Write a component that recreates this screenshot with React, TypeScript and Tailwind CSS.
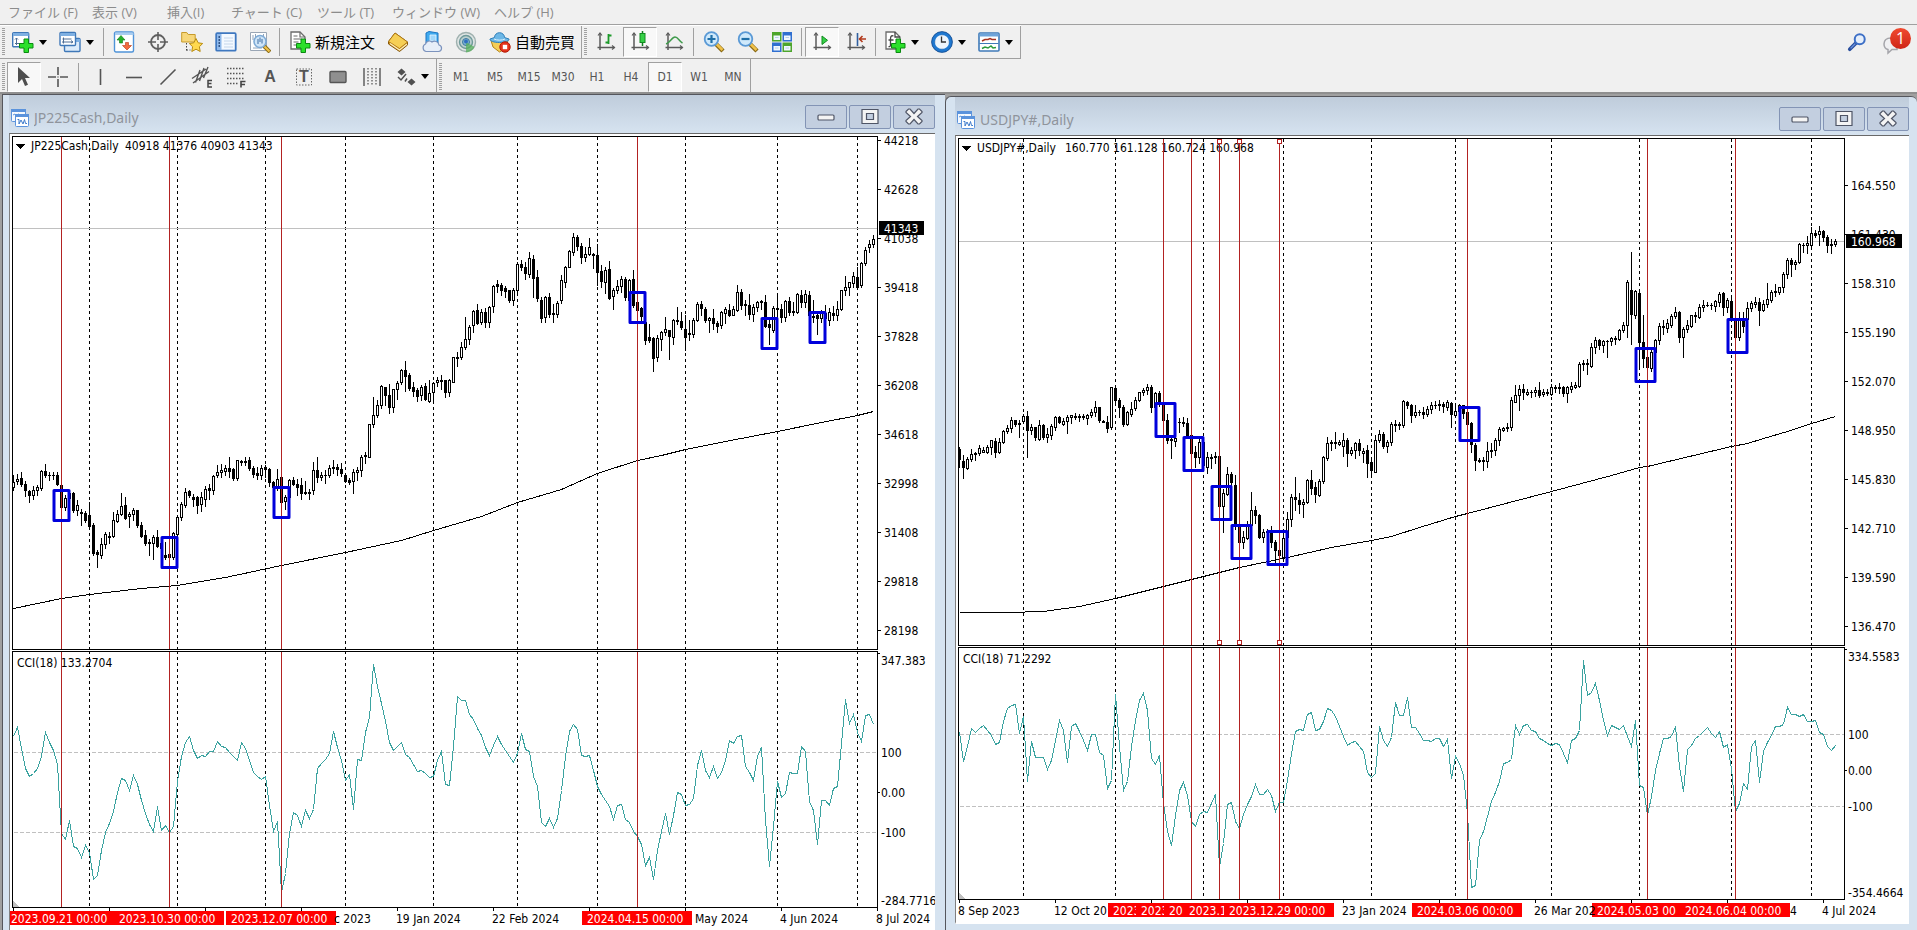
import type { ReactNode } from 'react';

type Mark = { bar: number; date: string; handles?: boolean };

type ChartData = {
  title: string;
  quotes: string;
  quotesX: number;
  indicator: string;
  // plot geometry, in pixels inside the client area
  right: number;
  priceBottom: number;
  cciTop: number;
  cciBottom: number;
  priceShift: number;
  cciShift: number;
  candles: string;
  cci: string;
  average: [number, number][];
  months: number[];
  marks: Mark[];
  boxes: { x: number; y: number }[];
  boxSize: [number, number];
  lastPrice: { y: number; label: string; width: number };
  priceLabels: { first: number; labels: string[] };
  cciLabels: { y: number; label: string }[];
  levels: number[];
  dates: { x: number; label: string }[];
};

const nikkei: ChartData = {
  title: 'JP225Cash,Daily',
  quotes: '40918 41376 40903 41343',
  quotesX: 115,
  indicator: 'CCI(18) 133.2704',
  right: 867,
  priceBottom: 515,
  cciTop: 517,
  cciBottom: 773,
  priceShift: -44,
  cciShift: 506,
  // high open close low, one bar each
  candles: `1078 1112 1098 1122,1076 1096 1090 1104,1072 1088 1104 1110,1096 1104 1122 1138,1122 1124 1134 1156,1110 1134 1122 1146,1108 1120 1114 1134,1066 1116 1068 1120,1048 1068 1080 1084,1070 1078 1080 1092,
1070 1080 1078 1090,1072 1078 1104 1106,1104 1106 1168 1172,1134 1170 1144 1176,1124 1144 1130 1160,1128 1130 1178 1184,1148 1178 1164 1190,1174 1182 1186 1218,1180 1186 1206 1212,1156 1192 1222 1226,
1214 1220 1298 1304,1288 1296 1300 1338,1256 1302 1272 1312,1238 1272 1244 1284,1240 1252 1250 1270,1184 1250 1206 1254,1178 1208 1188 1212,1130 1188 1166 1190,1140 1164 1200 1202,1184 1194 1188 1226,
1172 1188 1176 1206,1176 1178 1220 1224,1212 1220 1250 1254,1234 1248 1270 1274,1258 1268 1270 1302,1246 1270 1254 1314,1232 1252 1278 1282,1256 1284 1270 1300,1266 1304 1308 1314,1298 1300 1308 1312,
1240 1308 1242 1314,1190 1244 1196 1250,1156 1196 1160 1206,1116 1164 1126 1170,1120 1124 1136 1140,1132 1140 1146 1166,1138 1142 1162 1186,1128 1160 1142 1180,1110 1146 1118 1166,1104 1116 1120 1146,
1080 1122 1082 1132,1050 1080 1070 1086,1048 1070 1066 1086,1050 1068 1060 1078,1028 1060 1068 1086,1060 1062 1088 1092,1036 1088 1038 1094,1036 1040 1042 1050,1030 1042 1040 1050,1030 1038 1060 1064,
1054 1060 1076 1084,1056 1074 1078 1090,1050 1078 1060 1090,1052 1056 1062 1084,1060 1062 1100 1110,1096 1100 1112 1118,1062 1112 1090 1120,1084 1086 1154 1158,1134 1152 1140 1174,1090 1140 1094 1142,
1084 1092 1104 1108,1090 1104 1112 1134,1088 1108 1130 1146,1096 1128 1130 1132,1118 1130 1126 1146,1042 1122 1064 1132,1030 1064 1084 1098,1070 1084 1078 1092,1064 1080 1078 1102,1050 1078 1060 1086,
1036 1060 1058 1074,1048 1058 1062 1078,1046 1062 1074 1082,1076 1080 1096 1100,1088 1094 1098 1104,1062 1096 1070 1130,1056 1072 1064 1092,1022 1066 1028 1082,1016 1026 1024 1046,936 1028 936 1030,
862 936 910 946,868 912 884 918,826 884 830 892,832 834 854 882,824 854 888 906,838 888 838 902,816 838 822 866,782 820 786 824,760 786 802 844,794 798 836 840,
820 832 844 858,836 842 858 872,828 856 834 870,822 830 866 870,814 872 850 876,818 848 822 876,806 818 814 830,800 812 816 838,812 812 846 860,810 846 814 858,
748 818 750 820,736 748 752 774,708 750 720 754,638 720 698 726,660 698 664 712,618 660 620 678,600 616 654 656,614 652 624 656,612 624 650 666,606 650 608 666,
546 606 550 622,534 544 550 566,542 548 560 574,550 556 564 582,560 562 590 594,556 590 562 602,484 560 488 572,476 488 496 504,482 496 514 530,454 516 472 526,
462 474 528 580,504 524 584 592,582 590 640 650,578 638 580 652,570 580 628 636,600 626 628 650,592 628 598 636,518 590 534 598,494 538 498 554,450 496 452 498,
402 454 414 464,406 414 438 448,430 438 470 486,442 468 460 480,416 460 440 462,458 460 464 500,432 464 510 546,490 508 536 554,498 538 504 570,480 502 584 586,
556 578 562 614,534 560 550 570,522 550 530 568,526 530 580 590,530 588 534 592,506 530 604 610,566 594 618 624,610 612 634 650,640 650 702 712,656 694 700 708,
694 696 752 788,688 748 696 760,676 698 680 728,636 678 670 686,672 674 690 754,642 694 644 712,610 644 648 656,622 648 666 670,632 670 692 728,644 682 684 700,
640 684 646 694,596 646 600 648,592 600 612 630,610 614 646 652,636 646 640 680,614 640 654 670,648 654 662 680,620 660 624 668,608 626 614 654,600 616 630 634,
606 630 614 632,548 618 568 620,558 568 602 614,590 600 604 630,572 602 628 642,600 628 608 648,592 608 594 620,588 592 596 614,574 596 662 666,640 656 666 712,
606 672 612 680,572 612 614 636,600 614 636 652,588 636 592 648,582 592 622 630,596 620 622 632,570 622 572 626,560 574 596 608,562 594 572 608,564 574 632 640,
588 634 638 652,620 630 640 684,616 640 626 652,604 626 640 648,612 646 624 658,606 626 632 644,592 632 614 644,560 614 562 616,522 560 554 574,538 554 540 576,
510 542 522 554,498 524 552 556,482 548 486 554,442 486 450 492,422 440 432 454,408 432 418 442`,
  cci: `288 262 325 385 409 401 386 350 278 308 330 372 580 597 542 620 626 652 617 637 717 706 632 576 550 515 456 415 420 450
407 432 482 520 553 574 500 571 557 577 560 425 350 308 290 330 355 347 349 334 334 304 318 322 338 348 360 308 325 362
397 409 417 408 497 575 545 758 700 580 518 526 558 512 535 508 385 370 358 340 275 322 362 420 404 508 358 362 278 232
74 140 190 245 308 330 318 307 343 352 374 393 392 400 412 408 360 335 432 436 320 168 181 182 224 237 265 285 322 346
316 290 314 331 350 366 340 281 327 333 410 440 548 558 535 562 535 450 350 275 254 268 345 349 346 390 438 462 482 500
537 495 493 538 547 573 588 612 677 652 718 630 575 520 583 525 458 463 495 493 476 375 332 392 412 380 415 397 360 302
310 290 286 380 398 421 348 322 540 680 560 425 471 460 398 400 401 320 335 485 512 613 482 481 496 444 438 310 178 249
224 278 303 226 222 254`,
  average: [
    [0, 1451], [12, 1424], [19, 1412], [32, 1396], [41, 1387], [53, 1366], [67, 1332], [83, 1294], [97, 1262], [105, 1234], [117, 1195],
    [126, 1155], [137, 1118], [146, 1074], [156, 1037], [162, 1022], [168, 1006], [178, 984], [191, 957], [202, 932], [211, 911], [215, 900],
  ],
  months: [19, 41, 63, 83, 105, 126, 146, 168, 191, 211],
  marks: [
    { bar: 12, date: '2023.09.21 00:00' },
    { bar: 39, date: '2023.10.30 00:00' },
    { bar: 67, date: '2023.12.07 00:00' },
    { bar: 156, date: '2024.04.15 00:00' },
  ],
  boxes: [
    { x: 51, y: 355 },
    { x: 159, y: 402 },
    { x: 271, y: 352 },
    { x: 627, y: 157 },
    { x: 759, y: 183 },
    { x: 807, y: 177 },
  ],
  boxSize: [18, 33],
  lastPrice: { y: 94, label: '41343', width: 45 },
  priceLabels: {
    first: 6,
    labels: ['44218', '42628', '41038', '39418', '37828', '36208', '34618', '32998', '31408', '29818', '28198'],
  },
  cciLabels: [
    { y: 526, label: '347.383' },
    { y: 618, label: '100' },
    { y: 658, label: '0.00' },
    { y: 698, label: '-100' },
    { y: 766, label: '-284.7716' },
  ],
  levels: [618, 698],
  dates: [
    { x: 324, label: 'c 2023' },
    { x: 386, label: '19 Jan 2024' },
    { x: 482, label: '22 Feb 2024' },
    { x: 685, label: 'May 2024' },
    { x: 770, label: '4 Jun 2024' },
    { x: 866, label: '8 Jul 2024' },
  ],
};

const dollarYen: ChartData = {
  title: 'USDJPY#,Daily',
  quotes: '160.770 161.128 160.724 160.968',
  quotesX: 109,
  indicator: 'CCI(18) 71.2292',
  right: 888,
  priceBottom: 509,
  cciTop: 511,
  cciBottom: 763,
  priceShift: -46,
  cciShift: 504,
  candles: `1000 1006 1034 1058,1024 1040 1056 1088,1030 1060 1034 1062,1006 1034 1020 1040,1014 1020 1018 1038,996 1018 1004 1024,1000 1014 1010 1016,996 1014 1000 1018,980 1000 982 1020,976 984 1014 1028,
976 1014 986 1018,952 986 956 990,940 956 948 962,918 948 926 960,924 926 936 942,926 936 934 974,908 928 914 934,900 914 954 1028,936 952 946 964,944 946 972 982,
926 978 938 980,936 940 974 978,948 972 964 988,936 968 942 978,914 946 916 954,914 916 930 934,920 936 928 938,912 928 916 962,910 918 912 934,906 914 916 922,
908 914 918 928,908 914 918 922,908 920 912 936,894 912 902 918,872 902 890 914,888 890 926 932,924 928 930 932,914 930 948 958,834 946 834 950,832 836 870 876,
864 868 888 916,882 890 936 942,900 936 904 938,876 908 894 914,862 892 868 896,846 868 848 872,836 846 840 854,824 840 832 852,828 832 890 902,846 890 850 900,
844 850 880 886,880 882 926 930,908 926 982 990,972 978 982 1032,972 984 976 998,920 930 932 958,918 930 934 942,920 934 966 970,962 966 1018 1022,998 1016 1028 1056,
978 1030 988 1046,980 988 1052 1060,1016 1056 1030 1074,1020 1030 1032 1060,1016 1026 1030 1046,1024 1026 1166 1168,1118 1166 1130 1238,1056 1132 1076 1136,1072 1076 1100 1108,1080 1106 1220 1230,
1220 1226 1266 1270,1236 1268 1252 1284,1208 1256 1220 1258,1128 1220 1178 1240,1166 1178 1192 1214,1188 1192 1252 1256,1230 1254 1240 1266,1230 1240 1236 1260,1222 1238 1266 1280,1262 1266 1290 1328,
1280 1288 1304 1316,1240 1310 1256 1320,1182 1252 1202 1256,1132 1202 1142 1222,1084 1142 1146 1178,1130 1148 1160 1186,1146 1160 1154 1198,1090 1154 1094 1158,1064 1094 1116 1132,1100 1114 1132 1156,
1090 1134 1096 1138,1026 1096 1030 1102,972 1032 990 1038,980 988 990 1010,958 988 990 1004,980 992 986 996,962 998 980 1026,976 980 1018 1054,1000 1018 1008 1022,988 1008 990 1032,
978 990 1010 1022,1004 1018 1012 1042,994 1010 1046 1084,1030 1044 1066 1086,968 1070 980 1072,954 980 964 988,960 964 998 1004,982 998 986 1014,930 986 936 996,924 936 938 956,
930 940 936 950,870 938 872 944,872 874 882 892,880 884 912 930,882 912 904 916,896 904 904 912,888 904 908 920,886 908 894 914,876 894 884 906,872 884 882 892,
868 880 884 898,876 880 886 902,868 888 876 898,876 878 908 944,880 912 900 914,880 900 884 902,882 884 906 920,900 904 936 940,932 934 992 1014,990 994 1038 1064,
1032 1036 1040 1044,1030 1038 1040 1064,986 1040 1012 1058,990 1012 1010 1030,976 1010 982 1022,944 982 950 994,946 954 948 956,934 948 944 956,860 946 870 952,826 874 856 876,
828 856 838 896,824 838 846 866,838 852 846 856,842 846 846 860,834 848 842 858,820 840 854 862,838 852 848 858,838 850 846 856,824 852 834 856,826 834 836 846,
822 836 832 850,830 832 850 858,830 850 834 874,818 838 830 848,820 832 828 836,764 830 768 832,756 768 766 784,754 766 768 796,710 774 720 778,694 722 700 738,
698 702 716 726,700 716 704 734,700 704 704 750,692 704 696 714,690 696 698 712,670 698 674 700,652 674 658 680,534 660 540 692,456 562 628 712,560 632 564 640,
558 570 708 780,630 706 752 776,744 748 778 782,730 780 734 788,698 734 702 740,654 702 662 712,644 662 664 684,642 668 654 678,628 660 634 664,608 634 624 640,
620 624 694 706,664 694 670 750,644 670 658 678,630 662 632 666,622 634 632 650,600 638 608 640,590 608 602 620,594 602 604 606,598 604 604 614,590 606 592 620,
568 596 572 606,568 570 608 630,584 608 590 622,574 592 640 646,636 644 692 698,624 694 640 700,622 644 662 680,596 642 612 648,592 612 598 620,580 600 594 610,
584 594 616 658,590 616 600 620,542 600 586 610,560 590 568 594,544 568 564 578,552 566 552 572,512 554 516 566,472 516 478 528,472 478 488 522,478 488 484 502,
430 484 432 486,430 434 434 456,410 434 430 458,386 434 402 438,392 402 406 414,382 404 396 436,394 396 414 424,406 414 436 456,418 432 434 458,418 432 424 438`,
  cci: `278 364 318 265 277 266 256 270 287 313 306 245 204 195 192 280 228 425 305 353 352 353 387 362 302 241 272 367 260 250
275 300 330 283 284 338 345 445 420 163 320 451 425 320 240 180 160 212 355 373 347 490 575 616 525 450 427 465 545 559
522 515 516 490 464 680 610 492 486 545 566 522 492 470 433 463 463 448 465 514 488 487 420 340 274 268 271 222 217 272
267 243 205 211 230 258 290 316 308 304 318 335 398 411 401 260 300 320 293 188 226 226 172 262 263 280 300 301 303 296
296 320 298 415 348 370 405 520 742 736 600 573 530 485 458 424 370 366 358 257 282 256 253 270 275 295 302 311 315 310
314 340 367 300 294 270 62 166 158 131 180 240 287 256 262 268 257 290 320 242 435 441 526 470 390 340 296 295 289 258
380 455 328 316 295 285 275 262 280 292 275 322 314 385 515 490 430 448 320 302 428 335 308 285 260 260 253 203 223 223
228 223 244 243 242 277 283 318 332 315`,
  average: [
    [0, 1463], [12, 1463], [21, 1459], [30, 1445], [39, 1424], [48, 1398], [61, 1361], [70, 1337], [82, 1309], [93, 1282], [103, 1260], [108, 1250],
    [115, 1224], [124, 1194], [127, 1186], [148, 1124], [163, 1079], [170, 1058], [172, 1053], [193, 999], [197, 990], [201, 977], [207, 955],
    [213, 934], [219, 913],
  ],
  months: [16, 39, 61, 81, 103, 124, 148, 170, 193, 213],
  marks: [
    { bar: 51, date: '2023' },
    { bar: 58, date: '2023' },
    { bar: 65, date: '20', handles: true },
    { bar: 70, date: '2023.1', handles: true },
    { bar: 80, date: '2023.12.29 00:00', handles: true },
    { bar: 127, date: '2024.03.06 00:00' },
    { bar: 172, date: '2024.05.03 00' },
    { bar: 194, date: '2024.06.04 00:00' },
  ],
  boxes: [
    { x: 209, y: 266 },
    { x: 237, y: 300 },
    { x: 265, y: 349 },
    { x: 285, y: 388 },
    { x: 321, y: 394 },
    { x: 513, y: 270 },
    { x: 689, y: 211 },
    { x: 781, y: 182 },
  ],
  boxSize: [22, 36],
  lastPrice: { y: 105, label: '160.968', width: 56 },
  priceLabels: {
    first: 49,
    labels: ['164.550', '161.430', '158.310', '155.190', '152.070', '148.950', '145.830', '142.710', '139.590', '136.470'],
  },
  cciLabels: [
    { y: 520, label: '334.5583' },
    { y: 598, label: '100' },
    { y: 634, label: '0.00' },
    { y: 670, label: '-100' },
    { y: 756, label: '-354.4664' },
  ],
  levels: [598, 670],
  dates: [
    { x: 2, label: '8 Sep 2023' },
    { x: 98, label: '12 Oct 20' },
    { x: 386, label: '23 Jan 2024' },
    { x: 578, label: '26 Mar 202' },
    { x: 834, label: '4' },
    { x: 866, label: '4 Jul 2024' },
  ],
};

const barX = (bar: number) => 3 + bar * 4;

function Chart({ data }: { data: ChartData }) {
  const priceY = (v: number) => Math.floor(v / 2.8) + data.priceShift;
  const cciY = (v: number) => Math.floor(v / 3) + data.cciShift;
  const { right, priceBottom, cciTop, cciBottom, lastPrice } = data;
  const [boxW, boxH] = data.boxSize;

  const candles = data.candles.split(',').map((row) => row.trim().split(' ').map(Number));
  const cciPoints = data.cci
    .split(/\s+/)
    .map((v, i) => `${barX(i) + 0.5},${cciY(Number(v)) + 0.5}`)
    .join(' ');
  const averagePoints = data.average.map(([bar, v]) => `${barX(bar) + 0.5},${priceY(v) + 0.5}`).join(' ');

  return (
    <svg
      className="block h-full w-full font-['DejaVu_Sans_Condensed','DejaVu_Sans',sans-serif] text-xs"
      shapeRendering="crispEdges"
      role="img"
      aria-label={data.title}
    >
      {/* month separators */}
      {data.months.map((bar) => (
        <g key={bar} stroke="#000" strokeDasharray="3 3">
          <line x1={barX(bar) + 0.5} x2={barX(bar) + 0.5} y1={3} y2={priceBottom} />
          <line x1={barX(bar) + 0.5} x2={barX(bar) + 0.5} y1={cciTop} y2={cciBottom} />
        </g>
      ))}
      <line x1={3} x2={right} y1={lastPrice.y + 0.5} y2={lastPrice.y + 0.5} stroke="#c0c0c0" />
      {data.levels.map((y) => (
        <line key={y} x1={4} x2={right} y1={y + 0.5} y2={y + 0.5} stroke="#c0c0c0" strokeDasharray="4 2" />
      ))}

      <path d="M6 10h9l-4.5 5z" />
      <text x={21} y={16}>{data.title}</text>
      <text x={data.quotesX} y={16}>{data.quotes}</text>
      <text x={7} y={cciTop + 16}>{data.indicator}</text>

      <polyline points={averagePoints} fill="none" stroke="#000" />
      {candles.map(([high, open, close, low], i) => {
        const x = barX(i);
        const top = priceY(Math.min(open, close));
        const height = Math.max(1, priceY(Math.max(open, close)) - top + 1);
        return (
          <g key={i}>
            <rect x={x} y={priceY(high)} width={1} height={priceY(low) - priceY(high) + 1} />
            <rect x={x - 1} y={top} width={3} height={height} />
            {open > close && height > 2 && <rect x={x} y={top + 1} width={1} height={height - 2} fill="#fff" />}
          </g>
        );
      })}
      <polyline points={cciPoints} fill="none" stroke="#3ba3a0" />

      {data.marks.map(({ bar, handles }) => (
        <g key={bar} stroke="#b22222" fill="#fff">
          <line x1={barX(bar) + 0.5} x2={barX(bar) + 0.5} y1={3} y2={priceBottom} />
          <line x1={barX(bar) + 0.5} x2={barX(bar) + 0.5} y1={cciTop} y2={cciBottom} />
          {handles && <rect x={barX(bar) - 1.5} y={3.5} width={4} height={4} />}
          {handles && <rect x={barX(bar) - 1.5} y={priceBottom - 4.5} width={4} height={4} />}
        </g>
      ))}
      {data.boxes.map(({ x, y }) => (
        <rect
          key={x}
          x={x - boxW / 2 + 2}
          y={y + 1.5}
          width={boxW - 3}
          height={boxH - 3}
          fill="none"
          stroke="#0000dc"
          strokeWidth={3}
          strokeLinejoin="round"
          shapeRendering="auto"
        />
      ))}

      {/* frames */}
      <g fill="none" stroke="#000">
        <rect x={2.5} y={2.5} width={right - 2} height={priceBottom - 2} />
        <rect x={2.5} y={cciTop + 0.5} width={right - 2} height={cciBottom - cciTop} />
      </g>
      <path d={`M3 ${cciBottom}v-6l6 6z`} fill="#c0c0c0" />

      {/* price axis */}
      {data.priceLabels.labels.map((label, i) => (
        <g key={label}>
          <rect x={right} y={data.priceLabels.first + i * 49} width={4} height={1} />
          <text x={right + 7} y={data.priceLabels.first + i * 49 + 5}>{label}</text>
        </g>
      ))}
      <rect x={right + 2} y={lastPrice.y - 7} width={lastPrice.width} height={14} />
      <text x={right + 7} y={lastPrice.y + 5} fill="#fff">{lastPrice.label}</text>
      {data.cciLabels.map(({ y, label }) => (
        <text key={label} x={right + 4} y={y + 5}>{label}</text>
      ))}
      <rect x={right} y={cciTop + 2} width={3} height={1} />
      <rect x={right} y={data.cciLabels[2].y} width={3} height={1} />

      {/* time axis */}
      {Array.from({ length: 10 }, (_, i) => (
        <rect key={i} x={3 + i * 96} y={cciBottom} width={1} height={4} />
      ))}
      {data.marks.map(({ bar, date }) => (
        <g key={bar}>
          <rect x={barX(bar) - 55} y={cciBottom + 4} width={110} height={14} fill="#f00" />
          <text x={barX(bar) - 50} y={cciBottom + 16} fill="#fff">{date}</text>
        </g>
      ))}
      {data.dates.map(({ x, label }) => (
        <text key={label} x={x} y={cciBottom + 16}>{label}</text>
      ))}
    </svg>
  );
}

function WindowButton({ label, children }: { label: string; children: ReactNode }) {
  return (
    <button
      type="button"
      aria-label={label}
      className="flex h-6 w-[42px] items-center justify-center rounded-xs border border-[#8394b5] bg-[#c3cfe0]"
    >
      <svg width="20" height="18" viewBox="0 0 20 18" fill="#f4f4f4" stroke="#4f5566" strokeWidth="1.2">
        {children}
      </svg>
    </button>
  );
}

function ChartWindow({ data, className, clientClassName }: { data: ChartData; className: string; clientClassName: string }) {
  return (
    <section className={`flex min-w-0 flex-col border-l border-t border-[#55565c] bg-[#d6e3f0] ${className}`}>
      <header className="flex h-[38px] shrink-0 items-start bg-linear-to-b from-[#bfccdb] to-[#d6e3f0] pt-[10px] pl-0.5">
        <svg width="18" height="18" viewBox="0 0 18 18" className="mt-1 shrink-0">
          <rect x="0.5" y="0.5" width="14" height="12" rx="1" fill="#f5f9fe" stroke="#5b93dc" />
          <path d="M0 0h15v3H0z" fill="#5b93dc" />
          <path d="M2 6l2-1 1 1 3-1" fill="none" stroke="#5b93dc" />
          <rect x="4.5" y="5.5" width="13" height="12" rx="1" fill="#fff" stroke="#5b93dc" />
          <path d="M4 5h14v3H4z" fill="#5b93dc" />
          <path d="M6.500 10.500l1.500 0v4.500l2-4 2 4 1.500-4.500 1 4h1.500" fill="none" stroke="#3f7ccc" />
        </svg>
        <h2 className="ml-[5px] min-w-0 flex-1 truncate pt-px font-['Noto_Sans',sans-serif] text-sm/6 text-[#8f949c]">
          {data.title}
        </h2>
        <div className="flex gap-0.5">
          <WindowButton label="最小化">
            <rect x="2" y="7" width="16" height="5" rx="1" />
          </WindowButton>
          <WindowButton label="最大化">
            <path fillRule="evenodd" d="M2 1.500h16v14H2zM6.500 5.500v6h7v-6z" />
          </WindowButton>
          <WindowButton label="閉じる">
            <path d="M2 3.500L4.500 1H6l4 4.500L14 1h1.500L18 3.500v1L13.500 8.500 18 12.500v1L15.500 16H14l-4-4.500L6 16H4.500L2 13.500v-1L6.500 8.500 2 4.500z" />
          </WindowButton>
        </div>
      </header>
      <div className={`min-h-0 flex-1 overflow-hidden border-l border-t border-l-[#808080] border-t-[#696969] bg-white ${clientClassName}`}>
        <Chart data={data} />
      </div>
    </section>
  );
}

function Icon({ children, size = 22 }: { children: ReactNode; size?: number }) {
  return (
    <svg width={size} height={size} viewBox="0 0 22 22" fill="none" className="shrink-0" aria-hidden="true">
      {children}
    </svg>
  );
}

const Plus = () => (
  <path d="M12 8h4.500v4.500H21V17h-4.500v4.500H12V17H7.500v-4.500H12z" fill="#2be02b" stroke="#0b8a12" />
);

const Axes = () => (
  <g stroke="#5a5a5a" strokeWidth="1.500">
    <path d="M5 2v17M2.500 16.500h17" />
    <path d="M3 4.500l2-2.500 2 2.500M17 14.500l2.500 2-2.500 2" strokeWidth="1.200" />
  </g>
);

const Lens = ({ sign }: { sign: string }) => (
  <>
    <path d="M13 13l7 7" stroke="#8a6b16" strokeWidth="4.500" />
    <path d="M13.500 13l6 6" stroke="#f1c24a" strokeWidth="2.500" />
    <circle cx="8.500" cy="8" r="6.800" fill="#cfe9fb" stroke="#5b9ad6" strokeWidth="1.800" />
    <path d={sign} stroke="#1f6fa8" strokeWidth="2.200" />
  </>
);

const icons: Record<string, ReactNode> = {
  newChart: (
    <>
      <rect x="0.700" y="1.700" width="16" height="14" rx="1" fill="#fff" stroke="#3f78b8" strokeWidth="1.400" />
      <path d="M1 2h15.500v3H1z" fill="#7fb0e2" />
      <path d="M4.500 7v7M3 12.500h7M3 8.500l1.500-1.500L6 8.500" stroke="#4f6f96" />
      <Plus />
    </>
  ),
  profiles: (
    <>
      <rect x="5.500" y="7.500" width="15.500" height="13" rx="1" fill="#dcebfa" stroke="#3f78b8" strokeWidth="1.400" />
      <path d="M6 8h15v3H6z" fill="#7fb0e2" />
      <rect x="1" y="1.500" width="15.500" height="13" rx="1" fill="#fff" stroke="#3f78b8" strokeWidth="1.400" />
      <path d="M1.500 2H16v3H1.500z" fill="#7fb0e2" />
      <path d="M4.500 6.500v6M3 11h11M12 9.500l2 1.500-2 1M3.500 8h9" stroke="#4f6f96" />
    </>
  ),
  marketWatch: (
    <>
      <rect x="1.500" y="1" width="19" height="20" rx="1.500" fill="#fff" stroke="#4f93d8" strokeWidth="1.400" />
      <path d="M2 1.500h18.500V4H2z" fill="#a9cdf0" />
      <path d="M8 4.500l4 4.500H9.500v3h-3V9H4z" fill="#26b02c" stroke="#0d7a15" strokeWidth=".6" />
      <path d="M14 19l-4.500-4.500h3v-3h3v3h3z" fill="#f26a3d" stroke="#b83411" strokeWidth=".6" />
    </>
  ),
  target: (
    <g stroke="#5f5f5f" strokeWidth="1.800">
      <circle cx="11" cy="11" r="7" />
      <path d="M11 1v8M11 13v8M1 11h8M13 11h8" strokeWidth="1.600" />
    </g>
  ),
  navigator: (
    <>
      <path d="M.7 3V1.500h5l1.500 2h7V11H.7z" fill="#f7d77a" stroke="#c79a2a" />
      <path d="M5.500 12v9M5.500 19h4" stroke="#444" strokeDasharray="1.500 1.500" />
      <path d="M15 7.500l2.200 4.300 4.500.7-3.300 3.200.8 4.800-4.200-2.300-4.200 2.300.8-4.800-3.300-3.200 4.500-.7z" fill="#ffd94e" stroke="#b98d13" />
    </>
  ),
  dataWindow: (
    <>
      <rect x="1.200" y="2.200" width="19.500" height="17.500" rx="1" fill="#f4f9ff" stroke="#3f78c0" strokeWidth="1.800" />
      <path d="M2 3h4.500v16H2z" fill="#8fb8ea" />
      <path d="M3.500 6h1.500M3.500 9h1.500M3.500 12h1.500M3.500 15h1.500" stroke="#14376b" strokeWidth="1.500" />
      <path d="M9 7h9M9 10h9M9 13h9M9 16h9" stroke="#c5d6ea" />
    </>
  ),
  tester: (
    <>
      <path d="M1.500 1.500h16v18h-16z" fill="#fff" stroke="#9aa6b5" />
      <path d="M4 4v5M6.500 3v4M4 17h9M14.500 3v4" stroke="#8fa4bb" />
      <path d="M15 15l6 6" stroke="#8a6b16" strokeWidth="4" />
      <path d="M15.500 15.500l5 5" stroke="#f1c24a" strokeWidth="2" />
      <circle cx="11" cy="10.500" r="6" fill="#cfe5f8" stroke="#7fabd6" strokeWidth="1.600" />
      <path d="M9 13V8M13 12.500V8M11 11V6.500" stroke="#3f6fa5" />
    </>
  ),
  newOrder: (
    <>
      <path d="M2 1h9l5 5v12H2z" fill="#fff" stroke="#6b6b6b" strokeWidth="1.300" />
      <path d="M11 1v5h5M4.500 5h4M4.500 8h8M4.500 11h5M4.500 14h4" stroke="#6b6b6b" strokeWidth="1.200" />
      <Plus />
    </>
  ),
  editor: (
    <>
      <path d="M8 2l12.500 9v3L12.500 20.500 1.500 13v-2.500z" fill="#c98a14" stroke="#85570a" />
      <path d="M8 2l12.500 9-8 6.500-11-7z" fill="#f6cf55" stroke="#a8700d" strokeWidth=".8" />
      <path d="M3 12.500l9.500 6.500 7.500-6" stroke="#fdf0c0" strokeWidth="1.200" />
    </>
  ),
  cloud: (
    <>
      <path d="M5 2l3-1.500L17 2v10H5z" fill="#3fa9ee" stroke="#1b74c2" />
      <path d="M9 4h6v6H9z" fill="#9fd6fa" stroke="#e6f6ff" strokeWidth=".8" />
      <path d="M5 20.500a4 4 0 01-.5-7.500 4 4 0 016.500-2 4.500 4.500 0 017 3 3.300 3.300 0 01-.5 6.500z" fill="#e7eef8" stroke="#7c93bd" strokeWidth="1.200" />
    </>
  ),
  signals: (
    <>
      <circle cx="11" cy="11" r="9.500" fill="#dfe5e4" stroke="#9eb0ae" strokeWidth="1.400" />
      <circle cx="11" cy="11" r="6.500" fill="#bcd0cf" stroke="#6f9a9a" strokeWidth="1.400" />
      <circle cx="11" cy="11" r="3.500" fill="#7fb3d0" stroke="#3d7aa0" />
      <path d="M11 11v10.500a10 10 0 008.500-5.500z" fill="#57b05c" opacity=".75" />
      <circle cx="11" cy="10.500" r="2" fill="#2f6fc0" />
    </>
  ),
  autoTrade: (
    <>
      <path d="M2 9.500h17l-3 8-5.500 3.500L4 16z" fill="#f5ce58" stroke="#b58419" />
      <path d="M5.500 6.500a5 4.800 0 0110 0L20 8c.5 2-4 3.500-9.500 3.500S.5 10 1 8z" fill="#6db7e6" stroke="#2f7eb8" />
      <path d="M5 8c3 1.500 8 1.500 11 0" stroke="#d9f0fc" />
      <circle cx="16" cy="16" r="5.200" fill="#e5341c" stroke="#b31b08" />
      <rect x="13.800" y="13.800" width="4.400" height="4.400" fill="#fff" />
    </>
  ),
  bars: (
    <>
      <Axes />
      <path d="M13.500 3v10M13.500 4.500h3M10.500 11.500h3" stroke="#1c9a2a" strokeWidth="1.800" />
    </>
  ),
  candlesticks: (
    <>
      <Axes />
      <path d="M13.500 0v15" stroke="#127c1e" strokeWidth="1.500" />
      <rect x="11" y="2.500" width="5" height="9" fill="#35d046" stroke="#128a20" />
    </>
  ),
  line: (
    <>
      <Axes />
      <path d="M3 13c4-1 6-7 9-7s4 4 7.500 6" stroke="#3e9a4a" strokeWidth="1.500" />
    </>
  ),
  zoomIn: <Lens sign="M4.500 8h8M8.500 4v8" />,
  zoomOut: <Lens sign="M4.500 8h8" />,
  tile: (
    <>
      <path d="M1 1h9.500v9.500H1zM11.500 11.500H21V21h-9.500z" fill="#4da52c" />
      <path d="M11.500 1H21v9.500h-9.500zM1 11.500h9.500V21H1z" fill="#2f6fd0" />
      <path d="M2.500 4.500h6.500v4.500H2.500zM13 4.500h6.500v4.500H13zM2.500 15h6.500v4.500H2.500zM13 15h6.500v4.500H13z" fill="#f0f7ff" />
      <path d="M4 6.500h3.500M14.500 6.500H18M4 17h3.500M14.500 17H18" stroke="#b8d0e8" />
    </>
  ),
  autoScroll: (
    <>
      <Axes />
      <path d="M11 5v8.500l5.500-4.200z" fill="#35d046" stroke="#128a20" />
    </>
  ),
  shift: (
    <>
      <Axes />
      <path d="M12.500 2v13" stroke="#2f5f9f" strokeWidth="1.600" />
      <path d="M21 8h-6M17.500 5L14.500 8l3 3" stroke="#b23a1c" strokeWidth="1.600" />
    </>
  ),
  indicators: (
    <>
      <path d="M2 1h9l5 5v12H2z" fill="#fff" stroke="#6b6b6b" strokeWidth="1.300" />
      <path d="M11 1v5h5M9.500 5C7 4 6.500 6 6.500 8v6c0 1.500-1 2-2 1.500M4.500 9h5" stroke="#444" strokeWidth="1.300" />
      <Plus />
    </>
  ),
  clock: (
    <>
      <circle cx="11" cy="11" r="8.800" fill="#eef5fc" stroke="#1f78d0" strokeWidth="3.400" />
      <circle cx="11" cy="11" r="10.400" stroke="#12488c" strokeWidth=".8" />
      <path d="M10.500 5.500V11H15" stroke="#333" strokeWidth="1.300" />
      <path d="M11 3.500v1M11 17.500v1M3.500 11h1M17.500 11h1" stroke="#7d8da0" />
    </>
  ),
  template: (
    <>
      <rect x="1" y="2" width="20" height="18" rx="1" fill="#fff" stroke="#3f7ab8" strokeWidth="1.600" />
      <path d="M1.500 2.500h19v3h-19z" fill="#6ea4da" />
      <path d="M1.500 12.500h19" stroke="#3f7ab8" />
      <path d="M4 10l3-1.500h3l2-1 2 1h4" stroke="#a83220" strokeWidth="1.500" />
      <path d="M4 17.500l3-1.500 3 1 3-2 2 2 3-.5" stroke="#2b9a3b" strokeWidth="1.500" />
    </>
  ),
  cursor: <path d="M5 1v16l4-4 3 7 3-1.200-3-6.800h5z" fill="#4f4f4f" />,
  cross: <path d="M11 1v8M11 13v8M1 11h8M13 11h8M10.500 11h1" stroke="#555" strokeWidth="1.600" />,
  vertical: <path d="M11.500 3v16" stroke="#555" strokeWidth="1.600" />,
  horizontal: <path d="M3 11.500h16" stroke="#555" strokeWidth="1.600" />,
  trend: <path d="M3.500 18.500l15-15" stroke="#555" strokeWidth="1.600" />,
  channel: (
    <>
      <path d="M1 12.500L15 3M2 17L18 5.500M4.500 16.500L9 4M8.500 15L13 2M12.500 12L17 1" stroke="#555" strokeWidth="1.400" />
      <path d="M21 14.500h-4v6.500h4M17 17.500h3.500" stroke="#444" strokeWidth="1.500" />
    </>
  ),
  fibonacci: (
    <>
      <path d="M2 2.500h18M2 7.500h18M2 12.500h18M2 17.500h11" stroke="#555" strokeDasharray="1.500 1.500" strokeWidth="1.400" />
      <path d="M20.500 15.500H16v6M16 18.500h4" stroke="#444" strokeWidth="1.600" />
    </>
  ),
  label: <rect x="3.500" y="3" width="15" height="16" stroke="#666" strokeDasharray="1.500 1.500" />,
  rectangle: <rect x="3" y="5.500" width="16" height="11" rx="1" fill="#8f8f8f" stroke="#555" strokeWidth="1.400" />,
  periods: (
    <>
      <path d="M7 2v18M11 2v18M15 2v18" stroke="#666" strokeDasharray="1.500 1.500" strokeWidth="1.400" />
      <path d="M3 2v18M19 2v18" stroke="#555" strokeWidth="1.400" />
    </>
  ),
  arrows: (
    <>
      <path d="M7.500 2.500L11.500 6 7.500 9.500 3.500 6zM17.500 12.500L21.500 16l-4 3.500-4-3.500z" fill="#505050" />
      <path d="M4 11l3 3 5-6M13 12.500l-2 3" stroke="#505050" strokeWidth="1.500" />
    </>
  ),
};

function Caret() {
  return (
    <svg width="8" height="5" viewBox="0 0 8 5" className="ml-[5px]" aria-hidden="true">
      <path d="M0 0h8L4 5z" />
    </svg>
  );
}

function Tool({ icon, label, active = false }: { icon: string; label: string; active?: boolean }) {
  return (
    <button
      type="button"
      aria-label={label}
      aria-pressed={active}
      className={`flex h-[30px] w-[34px] items-center justify-center border ${
        active ? 'border-[#a0a0a0] border-r-white border-b-white bg-[#f8f8f8]' : 'border-transparent'
      }`}
    >
      <Icon>{icons[icon]}</Icon>
    </button>
  );
}

function MenuTool({ icon, label }: { icon: string; label: string }) {
  return (
    <button type="button" aria-label={label} aria-haspopup="menu" className="flex h-[30px] w-[47px] items-center pl-[5px]">
      <Icon>{icons[icon]}</Icon>
      <Caret />
    </button>
  );
}

function Grip() {
  return <span className="mx-0.5 h-7 w-[3px] bg-[repeating-linear-gradient(to_bottom,#a0a0a0_0_1px,transparent_1px_2px)]" />;
}

function Divider({ className = 'mx-0.5' }: { className?: string }) {
  return <span className={`h-7 w-0.5 border-l border-[#a0a0a0] ${className}`} />;
}

const menus = [
  { label: 'ファイル (F)', className: 'w-[84px]' },
  { label: '表示 (V)', className: 'w-[75px]' },
  { label: '挿入(I)', className: 'w-16' },
  { label: 'チャート (C)', className: 'w-[86px]' },
  { label: 'ツール (T)', className: 'w-[75px]' },
  { label: 'ウィンドウ (W)', className: 'w-[102px]' },
  { label: 'ヘルプ (H)', className: 'w-20' },
];

const periods = ['M1', 'M5', 'M15', 'M30', 'H1', 'H4', 'D1', 'W1', 'MN'];

export default function App() {
  return (
    <div className="flex h-screen flex-col overflow-hidden bg-[#f0f0f0] font-['Open_Sans','Noto_Sans_CJK_JP',sans-serif] text-black">
      <nav className="flex h-6 shrink-0 items-center pl-2">
        {menus.map((menu) => (
          <button
            key={menu.label}
            type="button"
            className={`shrink-0 text-left text-[13px]/5 whitespace-nowrap text-[#8c8c8c] ${menu.className}`}
          >
            {menu.label}
          </button>
        ))}
      </nav>

      <div className="flex h-[35px] shrink-0 items-stretch justify-between border-t border-[#a0a0a0]">
        <div className="flex border-t border-white">
          <div className="flex items-center border-r border-b border-[#a0a0a0]">
            <Grip />
            <MenuTool icon="newChart" label="新規チャート" />
            <MenuTool icon="profiles" label="チャート組表示" />
            <Divider />
            <Tool icon="marketWatch" label="気配値表示" />
            <Tool icon="target" label="クロスヘア" />
            <Tool icon="navigator" label="ナビゲーター" />
            <Tool icon="dataWindow" label="データウィンドウ" />
            <Tool icon="tester" label="ストラテジーテスター" />
            <Divider />
            <button type="button" className="flex h-[30px] items-center gap-1 px-1.5 text-[15px]/6 whitespace-nowrap">
              <Icon>{icons.newOrder}</Icon>
              新規注文
            </button>
            <Tool icon="editor" label="メタエディター" />
            <Tool icon="cloud" label="クラウド" />
            <Tool icon="signals" label="シグナル" />
            <button type="button" className="flex h-[30px] items-center gap-1 px-1.5 text-[15px]/6 whitespace-nowrap">
              <Icon>{icons.autoTrade}</Icon>
              自動売買
            </button>
          </div>
          <div className="flex items-center border-r border-b border-[#a0a0a0]">
            <Grip />
            <Tool icon="bars" label="バーチャート" />
            <Tool icon="candlesticks" label="ローソク足" active />
            <Tool icon="line" label="ラインチャート" />
            <Divider />
            <Tool icon="zoomIn" label="拡大" />
            <Tool icon="zoomOut" label="縮小" />
            <Tool icon="tile" label="ウィンドウの整列" />
            <Divider />
            <Tool icon="autoScroll" label="自動スクロール" active />
            <Tool icon="shift" label="チャートシフト" />
            <Divider />
            <MenuTool icon="indicators" label="インディケータ" />
            <MenuTool icon="clock" label="時間足" />
            <MenuTool icon="template" label="定型チャート" />
          </div>
        </div>
        <div className="flex gap-4 pt-[3px] pr-1.5">
          <button type="button" aria-label="検索" className="mt-1 h-5 w-5">
            <Icon size={20}>
              <path d="M3 19l7-7" stroke="#2a4f9e" strokeWidth="4" strokeLinecap="round" />
              <path d="M4 18l5-5" stroke="#6d93dc" strokeWidth="1.500" />
              <circle cx="14" cy="8" r="5.500" fill="#e6effb" stroke="#3d6fc6" strokeWidth="2.200" />
            </Icon>
          </button>
          <button type="button" aria-label="通知" className="relative h-7 w-7">
            <svg width="20" height="20" viewBox="0 0 20 20" className="mt-2" aria-hidden="true">
              <path d="M8 2C3 2 1 5 1 8s2 5 4 5.500V17l4-3.500h5V2z" fill="#f0f0f2" stroke="#a5a5aa" strokeWidth="1.500" />
            </svg>
            <span className="absolute top-0 right-0 h-[21px] w-[21px] rounded-full bg-linear-to-b from-[#f04a30] to-[#cf2416] text-center text-base/5 text-white">
              1
            </span>
          </button>
        </div>
      </div>

      <div className="flex h-[33px] shrink-0 items-center">
        <div className="flex h-full items-center border-r border-[#a0a0a0] pt-0.5">
          <Grip />
          <Tool icon="cursor" label="カーソル" active />
          <Tool icon="cross" label="十字カーソル" />
          <Divider className="mx-[3px]" />
          <Tool icon="vertical" label="垂直線" />
          <Tool icon="horizontal" label="水平線" />
          <Tool icon="trend" label="トレンドライン" />
          <Tool icon="channel" label="平行チャネル" />
          <Tool icon="fibonacci" label="フィボナッチ" />
          <button type="button" className="h-[30px] w-[34px] font-['Liberation_Sans',sans-serif] text-base font-bold text-[#555]">
            A
          </button>
          <button
            type="button"
            className="relative flex h-[30px] w-[34px] items-center justify-center font-['Liberation_Sans',sans-serif] text-base font-bold text-[#555]"
          >
            <span className="absolute inset-0 flex items-center justify-center">
              <Icon>{icons.label}</Icon>
            </span>
            T
          </button>
          <Tool icon="rectangle" label="長方形" />
          <Tool icon="periods" label="サイクルライン" />
          <MenuTool icon="arrows" label="矢印" />
        </div>
        <div className="flex h-full items-center border-r border-[#a0a0a0] pt-0.5">
          <Grip />
          {periods.map((period) => (
            <button
              key={period}
              type="button"
              aria-pressed={period === 'D1'}
              className={`h-[30px] w-[34px] border font-['DejaVu_Sans_Condensed','DejaVu_Sans',sans-serif] text-xs text-[#555] ${
                period === 'D1' ? 'border-[#a0a0a0] border-r-white border-b-white bg-[#f8f8f8]' : 'border-transparent'
              }`}
            >
              {period}
            </button>
          ))}
        </div>
      </div>

      <main className="grid min-h-0 flex-1 grid-cols-[minmax(0,943fr)_minmax(0,972fr)] border-t-2 border-[#8f8f8f] bg-[#a0a0a0] pl-0.5">
        <ChartWindow data={nikkei} className="pr-[10px] pl-[6px]" clientClassName="" />
        <ChartWindow data={dollarYen} className="mt-0.5 rounded-t-md pr-2 pb-[6px] pl-[9px]" clientClassName="border-b-2 border-b-white" />
      </main>
    </div>
  );
}
